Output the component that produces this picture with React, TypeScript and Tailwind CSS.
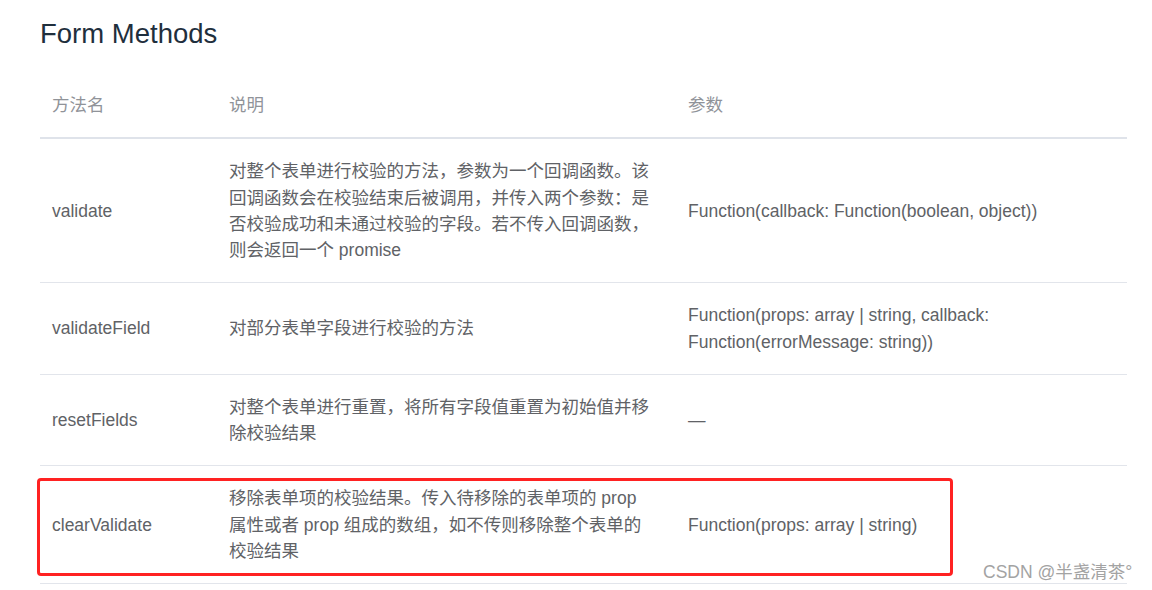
import React from 'react';

interface Method {
  name: string;
  desc: string;
  params: string;
}

const methods: Method[] = [
  {
    name: 'validate',
    desc: '对整个表单进行校验的方法，参数为一个回调函数。该回调函数会在校验结束后被调用，并传入两个参数：是否校验成功和未通过校验的字段。若不传入回调函数，则会返回一个 promise',
    params: 'Function(callback: Function(boolean, object))',
  },
  {
    name: 'validateField',
    desc: '对部分表单字段进行校验的方法',
    params: 'Function(props: array | string, callback: Function(errorMessage: string))',
  },
  {
    name: 'resetFields',
    desc: '对整个表单进行重置，将所有字段值重置为初始值并移除校验结果',
    params: '—',
  },
  {
    name: 'clearValidate',
    desc: '移除表单项的校验结果。传入待移除的表单项的 prop 属性或者 prop 组成的数组，如不传则移除整个表单的校验结果',
    params: 'Function(props: array | string)',
  },
];

const font = { fontFamily: '"Liberation Sans", Arial, "Noto Sans CJK SC", sans-serif' };

const App: React.FC = () => {
  return (
    <div className="relative w-[1152px] h-[590px] bg-white overflow-hidden" style={font}>
      <div className="pt-[13px] pl-[40px] pr-[25px]">
        <h2 className="text-[27.5px] leading-[41px] text-[#1f2f3d] mb-[19px]">Form Methods</h2>

        <table className="w-[1087px] table-fixed border-collapse text-[17.5px] leading-[26.25px]">
          <colgroup>
            <col className="w-[177px]" />
            <col className="w-[458px]" />
            <col />
          </colgroup>
          <thead>
            <tr className="border-b-2 border-[#dfe3ea]">
              <th className="text-left font-normal text-[#909399] px-[12px] py-[19px]">方法名</th>
              <th className="text-left font-normal text-[#909399] pl-[12px] pr-[20px] py-[19px]">说明</th>
              <th className="text-left font-normal text-[#909399] px-[13px] py-[19px]">参数</th>
            </tr>
          </thead>
          <tbody>
            {methods.map((m) => (
              <tr key={m.name} className="border-b border-[#e2e5eb]">
                <td className="align-middle text-[#606266] px-[12px] py-[19px]">{m.name}</td>
                <td className="align-middle text-[#606266] pl-[12px] pr-[20px] py-[19px]">{m.desc}</td>
                <td className="align-middle text-[#606266] px-[13px] py-[19px]">{m.params}</td>
              </tr>
            ))}
          </tbody>
        </table>
      </div>

      {/* annotation box */}
      <div className="absolute left-[37px] top-[478px] w-[916px] h-[98px] border-[3px] border-[#ff2222] rounded-[4px]" />

      {/* watermark */}
      <div className="absolute left-[983px] top-[561px] text-[17.5px] leading-[22px] text-[#a3a3a3] whitespace-nowrap">
        CSDN @半盏清茶°
      </div>
    </div>
  );
};

export default App;
